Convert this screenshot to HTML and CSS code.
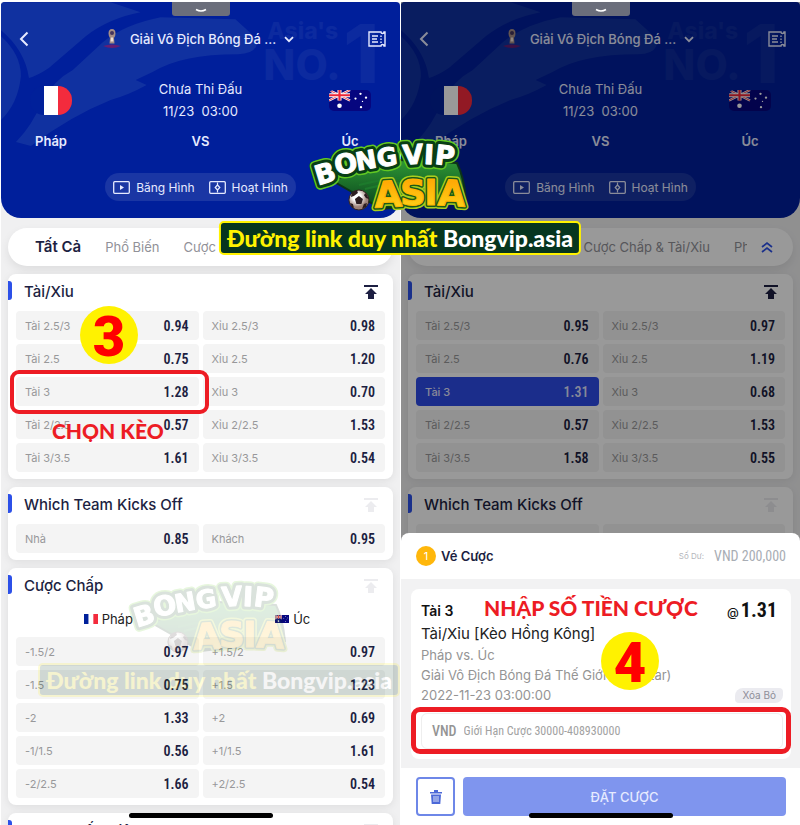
FILE: index.html
```html
<!DOCTYPE html>
<html lang="vi">
<head>
<meta charset="utf-8">
<meta name="viewport" content="width=device-width, initial-scale=1">
<title>Bongvip.asia</title>
<link rel="stylesheet" href="styles.css">
</head>
<body>
<svg class="defs" aria-hidden="true">
  <defs>
    <linearGradient id="gold" x1="0" y1="0" x2="0" y2="1"><stop offset="0" stop-color="#ff9d00"/><stop offset="1" stop-color="#ffd91c"/></linearGradient>
    <linearGradient id="grass" x1="0" y1="0" x2="0" y2="1"><stop offset="0" stop-color="#2f9a35"/><stop offset="1" stop-color="#07401d"/></linearGradient>
    <radialGradient id="shine" cx=".4" cy=".35"><stop offset=".4" stop-color="#fff"/><stop offset="1" stop-color="#9d8278"/></radialGradient>
    <g id="word-top" class="logo-top">
      <text transform="translate(16 34) rotate(-17)" y="10">B</text><text transform="translate(37 25) rotate(-12)" y="9">O</text><text transform="translate(57 21) rotate(-10)" y="9" class="small">N</text><text transform="translate(78 18) rotate(-8)" y="9" class="small">G</text><text transform="translate(104 15) rotate(-4)" y="10">V</text><text transform="translate(120 15) rotate(3)" y="10">I</text><text transform="translate(136 16) rotate(7)" y="10">P</text>
    </g>
    <g id="word-low" class="logo-low">
      <text transform="translate(79 54) rotate(-3)" y="14">A</text><text transform="translate(104 52)" y="14">S</text><text transform="translate(122 52)" y="14">I</text><text transform="translate(143 53) rotate(3)" y="14">A</text>
    </g>
  </defs>
  <symbol id="i-back" viewBox="0 0 10 16"><path d="M8.500 1.500 2 8l6.500 6.500" fill="none" stroke="currentColor" stroke-width="2"/></symbol>
  <symbol id="i-down" viewBox="0 0 10 7"><path d="M1 1.200 5 5.200 9 1.200" fill="none" stroke="currentColor" stroke-width="1.800"/></symbol>
  <symbol id="i-pull" viewBox="0 0 12 5"><path d="M1 1.500q5 3 10 0" fill="none" stroke="#fff" stroke-width="1.500"/></symbol>
  <symbol id="i-cup" viewBox="0 0 18 20"><path d="M0 17q9-3 18 0-9 4-18 0Z" fill="#8a1560" opacity=".7"/><path d="M5.500 4.500Q5.500 0 9 0t3.500 4.500Q12.500 7 11 9l.5 5.500h-5L7 9Q5.500 7 5.500 4.500Z" fill="#a58d86"/><circle cx="9" cy="4" r="2" fill="#45345d"/><path d="M8 8.500h2l.500 4h-3Z" fill="#eee0d5"/></symbol>
  <symbol id="i-list" viewBox="0 0 18 16"><path d="M1 1h12q0 1.500 1.500 1.500T16 1h1v14h-1q0-1.500-1.500-1.500T13 15H1Z" fill="none" stroke="currentColor" stroke-width="1.400"/><path d="M4 5h6M4 8h5M4 11h6" stroke="currentColor" stroke-width="1.400"/><path d="M13 4.500v8" stroke="currentColor" stroke-width="1.400" stroke-dasharray="1.500 1.500"/></symbol>
  <symbol id="i-video" viewBox="0 0 17 13"><rect x=".7" y=".7" width="15.600" height="11.600" rx="1" fill="none" stroke="currentColor" stroke-width="1.300"/><path d="m7 4 4 2.500L7 9Z" fill="currentColor"/></symbol>
  <symbol id="i-pitch" viewBox="0 0 17 13"><rect x=".7" y=".7" width="15.600" height="11.600" rx="1" fill="none" stroke="currentColor" stroke-width="1.300"/><path d="M8.500 1.500v3M8.500 8.500v3" stroke="currentColor" stroke-width="1.200"/><path d="m8.500 4 2.300 2.500L8.500 9 6.200 6.500Z" fill="none" stroke="currentColor" stroke-width="1.200"/></symbol>
  <symbol id="i-top" viewBox="0 0 14 14"><path d="M0 0h14v2H0ZM7 3l6 6H10v5H4V9H1Z" fill="currentColor"/></symbol>
  <symbol id="i-up2" viewBox="0 0 12 12"><path d="m1 6 5-4 5 4M1 11l5-4 5 4" fill="none" stroke="#2c50e8" stroke-width="1.700"/></symbol>
  <symbol id="i-trash" viewBox="0 0 12 14"><path d="M4 0h4v2h4v1.500H0V2h4ZM1 4.500h10L10.300 14H1.700Z" fill="#4c69d8"/><path d="M4 6v6M6 6v6M8 6v6" stroke="#fff" stroke-width=".8"/></symbol>
  <symbol id="f-fr" viewBox="0 0 3 2" preserveAspectRatio="none"><path fill="#00209a" d="M0 0h1v2H0Z"/><path fill="#fff" d="M1 0h1v2H1Z"/><path fill="#f32b3d" d="M2 0h1v2H2Z"/></symbol>
  <symbol id="f-au" viewBox="0 0 42 22" preserveAspectRatio="none"><path fill="#06067f" d="M0 0h42v22H0Z"/><path d="m0 0 21 11M21 0 0 11" stroke="#fff" stroke-width="2.400"/><path d="m0 0 21 11M21 0 0 11" stroke="#e8283a" stroke-width=".9"/><path d="M10.500 0v11M0 5.500h21" stroke="#fff" stroke-width="4"/><path d="M10.500 0v11M0 5.500h21" stroke="#ec2436" stroke-width="2.200"/><circle cx="10.500" cy="16.500" r="2.300" fill="#fff"/><g fill="#fff"><circle cx="31.500" cy="4" r="1.200"/><circle cx="26.500" cy="9" r="1.100"/><circle cx="37" cy="8" r="1.200"/><circle cx="33.500" cy="12" r=".7"/><circle cx="32" cy="18" r="1.200"/></g></symbol>
  <symbol id="art" viewBox="0 0 400 216">
    <path d="M0 0h110l30 10Q108 16 85 34L48 66q-12 8-20 10Q24 48 0 28Z" fill="#1031a0"/>
    <path d="M0 34q20 18 20 40-3 28-20 44Z" fill="#1031a0"/>
    <path d="M15 140q16-16 26-40 12-22 31-32l30-28q22-18 58-25l75 2 11 10q10 8 10 17-4 8-18 8-58 0-86 18l-17 8 11 5q-18 10-36 15-40 16-80 46Z" fill="#1031a0"/>
    <g class="art-text"><text x="267" y="37" font-size="23">Asia's</text><text x="263" y="78" font-size="42">NO.</text><text x="343" y="81" font-size="82">1</text></g>
  </symbol>
  <symbol id="logo" viewBox="-2 -4 164 80" overflow="visible">
    <path d="M24 42 70 20l78 4q7 14 9 36l-84 10Z" fill="url(#grass)" stroke="#0c3318" stroke-width="2"/>
    <path d="M50 46q30-8 60-8M56 50q30-8 60-8" stroke="#1d7a2c" stroke-width="2" fill="none"/>
    <use href="#word-top" class="edge"/><use href="#word-top" class="dark"/><use href="#word-top" class="light"/>
    <use href="#word-low" class="rim"/><use href="#word-low" class="brown"/><use href="#word-low" class="gold"/>
    <circle cx="50" cy="61" r="10" fill="url(#shine)" stroke="#342521"/>
    <path d="m50 57 4 3-1.500 5h-5L46 60ZM43 53l5-2 1 3-4 3-3 1ZM57 54l3 6-3-1-2-3ZM41 64l3 1 1 4-2-1ZM58 64l-3 1-2 5 4-2Z" fill="#2c1d20"/>
  </symbol>
</svg>

<main class="stage">
  <section class="phone">
    <span class="pull"><svg width="12" height="5"><use href="#i-pull"/></svg></span>
    <header class="hero">
      <svg class="art" aria-hidden="true"><use href="#art"/></svg>
      <nav class="bar">
        <button class="plain" aria-label="Back"><svg width="10" height="16"><use href="#i-back"/></svg></button>
        <button class="plain league"><svg width="18" height="20"><use href="#i-cup"/></svg><span>Giải Vô Địch Bóng Đá ...</span><svg width="10" height="7"><use href="#i-down"/></svg></button>
        <button class="plain" aria-label="List"><svg width="18" height="16"><use href="#i-list"/></svg></button>
      </nav>
      <div class="match">
        <div class="team"><span class="flag"><svg class="fr" width="42" height="29"><use href="#f-fr"/></svg></span><b>Pháp</b></div>
        <div class="info"><span>Chưa Thi Đấu</span><span class="date">11/23&nbsp; 03:00</span><b>VS</b></div>
        <div class="team"><span class="flag"><svg class="au" width="42" height="21"><use href="#f-au"/></svg></span><b>Úc</b></div>
      </div>
      <div class="media">
        <button class="plain"><svg width="17" height="13"><use href="#i-video"/></svg>Băng Hình</button>
        <button class="plain"><svg width="17" height="13"><use href="#i-pitch"/></svg>Hoạt Hình</button>
      </div>
    </header>
    <nav class="tabs"><div class="tab-list"><a href="#" class="on">Tất Cả</a><a href="#">Phổ Biến</a><a href="#">Cược Chấp &amp; Tài/Xỉu</a><a href="#">Phạt Góc</a></div><svg width="12" height="12"><use href="#i-up2"/></svg></nav>
    <div class="cards">
      <section class="card">
        <h2>Tài/Xỉu<svg width="14" height="14"><use href="#i-top"/></svg></h2>
        <div class="odds">
          <button>Tài 2.5/3<b>0.94</b></button><button>Xỉu 2.5/3<b>0.98</b></button>
          <button>Tài 2.5<b>0.75</b></button><button>Xỉu 2.5<b>1.20</b></button>
          <button>Tài 3<b>1.28</b></button><button>Xỉu 3<b>0.70</b></button>
          <button>Tài 2/2.5<b>0.57</b></button><button>Xỉu 2/2.5<b>1.53</b></button>
          <button>Tài 3/3.5<b>1.61</b></button><button>Xỉu 3/3.5<b>0.54</b></button>
        </div>
      </section>
      <section class="card">
        <h2>Which Team Kicks Off<svg class="off" width="14" height="14"><use href="#i-top"/></svg></h2>
        <div class="odds"><button>Nhà<b>0.85</b></button><button>Khách<b>0.95</b></button></div>
      </section>
      <section class="card">
        <h2>Cược Chấp<svg class="off" width="14" height="14"><use href="#i-top"/></svg></h2>
        <div class="sides"><span><svg width="14" height="10"><use href="#f-fr"/></svg>Pháp</span><span><svg width="14" height="8"><use href="#f-au"/></svg>Úc</span></div>
        <div class="odds">
          <button>-1.5/2<b>0.97</b></button><button>+1.5/2<b>0.97</b></button>
          <button>-1.5<b>0.75</b></button><button>+1.5<b>1.23</b></button>
          <button>-2<b>1.33</b></button><button>+2<b>0.69</b></button>
          <button>-1/1.5<b>0.56</b></button><button>+1/1.5<b>1.61</b></button>
          <button>-2/2.5<b>1.66</b></button><button>+2/2.5<b>0.54</b></button>
        </div>
      </section>
      <section class="card">
        <h2>Cược Chấp Hiệp 1<svg class="off" width="14" height="14"><use href="#i-top"/></svg></h2>
      </section>
    </div>
    <span class="home"></span>
    <div class="ring ring-pick"></div>
    <span class="step step-three">3</span>
    <strong class="note note-pick">CHỌN KÈO</strong>
  </section>

  <section class="phone">
    <span class="pull"><svg width="12" height="5"><use href="#i-pull"/></svg></span>
    <header class="hero">
      <svg class="art" aria-hidden="true"><use href="#art"/></svg>
      <nav class="bar">
        <button class="plain" aria-label="Back"><svg width="10" height="16"><use href="#i-back"/></svg></button>
        <button class="plain league"><svg width="18" height="20"><use href="#i-cup"/></svg><span>Giải Vô Địch Bóng Đá ...</span><svg width="10" height="7"><use href="#i-down"/></svg></button>
        <button class="plain" aria-label="List"><svg width="18" height="16"><use href="#i-list"/></svg></button>
      </nav>
      <div class="match">
        <div class="team"><span class="flag"><svg class="fr" width="42" height="29"><use href="#f-fr"/></svg></span><b>Pháp</b></div>
        <div class="info"><span>Chưa Thi Đấu</span><span class="date">11/23&nbsp; 03:00</span><b>VS</b></div>
        <div class="team"><span class="flag"><svg class="au" width="42" height="21"><use href="#f-au"/></svg></span><b>Úc</b></div>
      </div>
      <div class="media">
        <button class="plain"><svg width="17" height="13"><use href="#i-video"/></svg>Băng Hình</button>
        <button class="plain"><svg width="17" height="13"><use href="#i-pitch"/></svg>Hoạt Hình</button>
      </div>
    </header>
    <nav class="tabs"><div class="tab-list"><a href="#" class="on">Tất Cả</a><a href="#">Phổ Biến</a><a href="#">Cược Chấp &amp; Tài/Xỉu</a><a href="#">Phạt Góc</a></div><svg width="12" height="12"><use href="#i-up2"/></svg></nav>
    <div class="cards">
      <section class="card">
        <h2>Tài/Xỉu<svg width="14" height="14"><use href="#i-top"/></svg></h2>
        <div class="odds">
          <button>Tài 2.5/3<b>0.95</b></button><button>Xỉu 2.5/3<b>0.97</b></button>
          <button>Tài 2.5<b>0.76</b></button><button>Xỉu 2.5<b>1.19</b></button>
          <button class="picked">Tài 3<b>1.31</b></button><button>Xỉu 3<b>0.68</b></button>
          <button>Tài 2/2.5<b>0.57</b></button><button>Xỉu 2/2.5<b>1.53</b></button>
          <button>Tài 3/3.5<b>1.58</b></button><button>Xỉu 3/3.5<b>0.55</b></button>
        </div>
      </section>
      <section class="card">
        <h2>Which Team Kicks Off<svg class="off" width="14" height="14"><use href="#i-top"/></svg></h2>
        <div class="odds"><button aria-label="Nhà"></button><button aria-label="Khách"></button></div>
      </section>
    </div>
    <div class="shade"></div>
    <form class="sheet">
      <div class="sheet-head"><span class="count">1</span><b>Vé Cược</b><small>Số Dư:</small><span class="balance">VND 200,000</span></div>
      <div class="sheet-body">
        <div class="slip">
          <div class="slip-top"><b>Tài 3</b><span class="price">@<b>1.31</b></span></div>
          <p class="market">Tài/Xỉu [Kèo Hồng Kông]</p>
          <p>Pháp vs. Úc</p>
          <p>Giải Vô Địch Bóng Đá Thế Giới (tại Qatar)</p>
          <div class="slip-date"><span>2022-11-23 03:00:00</span><button type="button">Xóa Bỏ</button></div>
          <div class="stake"><label for="stake">VND</label><input id="stake" type="text" placeholder="Giới Hạn Cược 30000-408930000"></div>
        </div>
      </div>
      <div class="sheet-foot"><button type="button" class="trash" aria-label="Xóa"><svg width="12" height="14"><use href="#i-trash"/></svg></button><button type="button" class="place">ĐẶT CƯỢC</button></div>
      <div class="ring ring-stake"></div>
      <span class="step step-four">4</span>
      <strong class="note note-stake">NHẬP SỐ TIỀN CƯỢC</strong>
    </form>
    <span class="home"></span>
  </section>

  <div class="brand"><svg width="164" height="80"><use href="#logo"/></svg><p>Đường link duy nhất <span>Bongvip.asia</span></p></div>
  <div class="brand faded" aria-hidden="true"><svg width="164" height="80"><use href="#logo"/></svg><p>Đường link duy nhất <span>Bongvip.asia</span></p></div>
</main>
</body>
</html>
```

FILE: styles.css
```css
* { box-sizing: border-box; }
body { margin: 0; font-family: Inter, "Noto Sans", sans-serif; color: #1d1f42; background: #fff; }
button, input { font: inherit; color: inherit; }
button { cursor: pointer; border: 0; padding: 0; }
svg { flex: none; display: block; }
p, h2 { margin: 0; }
.defs { position: absolute; width: 0; height: 0; }

.stage { position: relative; display: grid; grid-template-columns: 1fr 1fr; height: 100vh; overflow: hidden; }
.phone { position: relative; height: 100vh; overflow: hidden; margin-left: 1px; padding-top: 2px; background: linear-gradient(#fff 2px, #f0f0f1 2px); }

.pull { position: absolute; z-index: 4; top: 2px; left: 50%; margin-left: -29px; width: 58px; height: 14px; border-radius: 0 0 3px 3px; background: #6b6e7b; display: flex; align-items: center; justify-content: center; padding-top: 2px; }
.hero { position: relative; overflow: hidden; background: #001f9b; color: #e6eaff; border-radius: 4px 4px 20px 20px; padding: 20px 0 17px; }
.art { position: absolute; inset: 0; width: 100%; height: 216px; }
.art-text { font-family: Inter, sans-serif; font-weight: 800; fill: #0c2a9f; }
.bar, .match, .media { position: relative; }
.plain { background: none; display: flex; align-items: center; }
.bar { display: flex; align-items: center; justify-content: space-between; height: 34px; padding: 0 14px 0 18px; }
.league { gap: 8px; font-size: 13px; font-weight: 500; }
.league svg:first-child { margin-right: 1px; }
.match { display: grid; grid-template-columns: 100px 1fr 100px; margin-top: 22px; text-align: center; font-size: 14px; line-height: 22px; }
.match b { font-weight: 600; }
.team, .info { display: flex; flex-direction: column; align-items: center; }
.flag { height: 44px; display: flex; align-items: center; }
.flag .fr { border-radius: 14px; }
.flag .au { border-radius: 5px; }
.team b, .info b { margin-top: 8px; font-size: 13px; }
.info { font-size: 13px; }
.media { display: flex; gap: 14px; width: fit-content; height: 28px; margin: 21px auto 0; padding: 0 8px; border-radius: 14px; background: #1a36a4; font-size: 12px; }
.media .plain { gap: 6px; }

.tabs { display: flex; align-items: center; height: 38px; margin: 10px 7px 8px; padding: 0 20px 0 27px; border-radius: 19px; background: #fff; box-shadow: 0 4px 10px rgba(0, 0, 0, .08); }
.tab-list { flex: 1; display: flex; gap: 24px; overflow: hidden; white-space: nowrap; margin-right: 14px; line-height: 24px; }
.tab-list a { color: #919198; text-decoration: none; font-size: 13px; }
.tab-list .on { color: #1d1f42; font-size: 15px; font-weight: 600; }

.cards { display: flex; flex-direction: column; gap: 8px; padding: 0 7px; }
.card { background: #fff; border-radius: 8px; padding: 0 8px 7px; box-shadow: 0 2px 8px rgba(0, 0, 0, .08); }
.card h2 { position: relative; display: flex; align-items: center; justify-content: space-between; height: 37px; padding: 0 7px 2px 8px; font-size: 15px; font-weight: 500; }
.card h2::before { content: ""; position: absolute; left: -8px; top: 7px; width: 4px; height: 19px; border-radius: 0 3px 3px 0; background: #2c50e8; }
.off { color: #ececef; }
.odds { display: grid; grid-template-columns: 1fr 1fr; gap: 4px; }
.odds button { display: flex; align-items: center; justify-content: space-between; height: 29px; padding: 0 10px 0 9px; border-radius: 4px; background: #f4f4f4; color: #98989a; font-size: 11px; }
.odds b { font-family: "Roboto Condensed", "Liberation Sans Narrow", Roboto, sans-serif; font-size: 14px; font-weight: 600; color: #1d1f42; }
.odds .picked, .odds .picked b { background: #2e4be8; color: #e1e5ff; font-weight: 500; }
.sides { display: grid; grid-template-columns: 1fr 1fr; height: 32px; padding: 0 0 4px; font-size: 13px; color: #222; }
.sides span { display: flex; align-items: center; justify-content: center; gap: 4px; }

.shade { position: absolute; inset: 2px 0 0; background: rgba(0, 0, 0, .4); }
.home { position: absolute; bottom: 7px; left: 50%; margin-left: -72px; width: 144px; height: 5px; border-radius: 3px; background: #000; }

.sheet { position: absolute; left: 0; right: 0; bottom: 0; background: #fff; border-radius: 8px 8px 0 0; }
.sheet-head { display: flex; align-items: center; height: 46px; padding: 0 14px 0 15px; font-size: 14px; }
.sheet-head > b { margin-left: 5px; margin-right: auto; font-weight: 600; font-size: 13px; }
.count { width: 20px; height: 20px; border-radius: 50%; background: #ffb70b; color: #fff; font-size: 11px; line-height: 20px; text-align: center; }
.sheet-head small { font-size: 8px; color: #b4b6bc; margin-right: 10px; }
.balance, .stake { font-family: "Roboto Condensed", "Liberation Sans Narrow", Roboto, sans-serif; }
.balance { color: #a8adb4; font-size: 14px; }
.sheet-body { padding: 10px 9px 9px 10px; background: #f2f2f3; }
.slip { background: #fff; border-radius: 8px; padding: 10px 8px 10px 10px; font-size: 13px; line-height: 20px; color: #949494; }
.slip-top { display: flex; justify-content: space-between; align-items: center; height: 24px; padding-right: 6px; font-size: 14px; color: #111; }
.slip-top > b { font-weight: 600; }
.price { font-size: 12px; font-weight: 500; }
.price b { font-family: "Roboto Condensed", "Liberation Sans Narrow", Roboto, sans-serif; font-size: 20px; margin-left: 2px; }
.slip .market { color: #222; font-size: 15px; line-height: 22px; }
.slip-date { display: flex; justify-content: space-between; align-items: center; }
.slip-date button { background: #ebebf0; color: #8e8e98; font-size: 10px; line-height: 15px; padding: 0 7px; border-radius: 8px 4px 8px 4px; }
.stake { display: flex; align-items: center; gap: 7px; height: 36px; margin-top: 8px; padding: 0 10px; border: 1px solid #eee; border-radius: 6px; font-size: 14px; font-weight: 500; }
.stake input { flex: 1; min-width: 0; border: 0; padding: 0; background: none; font-size: 12px; font-weight: 400; }
.stake input::placeholder { color: #a2a2a2; opacity: 1; }
.sheet-foot { display: flex; gap: 8px; padding: 9px 14px 9px 15px; }
.sheet-foot button { height: 39px; border-radius: 4px; }
.sheet-foot .trash { width: 39px; background: #fff; border: 2px solid #6e87e8; display: flex; align-items: center; justify-content: center; }
.sheet-foot .place { flex: 1; background: #7f95ee; color: #e6ebff; font-size: 13px; font-weight: 500; }

.ring { position: absolute; border: 4px solid #ed1c24; border-radius: 9px; pointer-events: none; }
.ring-pick { left: 9px; top: 370px; width: 199px; height: 44px; }
.ring-stake { left: 10px; right: 9px; bottom: 71px; height: 47px; border-width: 5px; }
.step { position: absolute; width: 58px; height: 58px; border-radius: 50%; background: #fff200; color: #f00; font-family: Roboto, sans-serif; font-size: 56px; font-weight: 900; line-height: 62px; text-align: center; }
.step-three { left: 79px; top: 306px; }
.step-four { left: 200px; bottom: 135px; }
.note { position: absolute; color: #ed1c24; font-size: 21px; line-height: 28px; font-weight: 900; white-space: nowrap; font-family: Lato, Inter, sans-serif; }
.note-pick { left: 51px; top: 417px; }
.note-stake { left: 83px; bottom: 203px; }

.brand { position: absolute; left: 50%; top: 135px; transform: translateX(-50%); display: flex; flex-direction: column; align-items: center; }
.brand svg { margin-right: 23px; overflow: visible; }
.brand p { margin-top: 6px; height: 34px; line-height: 30px; padding: 0 6px; border: 2px solid #fff200; border-radius: 5px; background: #06351f; color: #fff200; font-family: Lato, Inter, sans-serif; font-size: 23px; font-weight: 900; white-space: nowrap; }
.brand span { color: #fff; }
.faded { top: 577px; left: 219px; opacity: .15; }

.logo-top, .logo-low { font-family: "DejaVu Sans", sans-serif; font-weight: 700; text-anchor: middle; stroke-linejoin: round; }
.logo-top { font-size: 27px; }
.logo-top .small { font-size: 25px; }
.logo-low { font-size: 36px; }
.edge { stroke: #62c822; stroke-width: 10px; }
.dark { stroke: #083d16; stroke-width: 7px; }
.light { fill: #fff; stroke: #fff; stroke-width: 1px; }
.rim { stroke: #a9cf1d; stroke-width: 7px; }
.brown { stroke: #1c5a16; stroke-width: 4px; }
.gold { fill: url(#gold); stroke: #ffb400; stroke-width: 1px; }
```
